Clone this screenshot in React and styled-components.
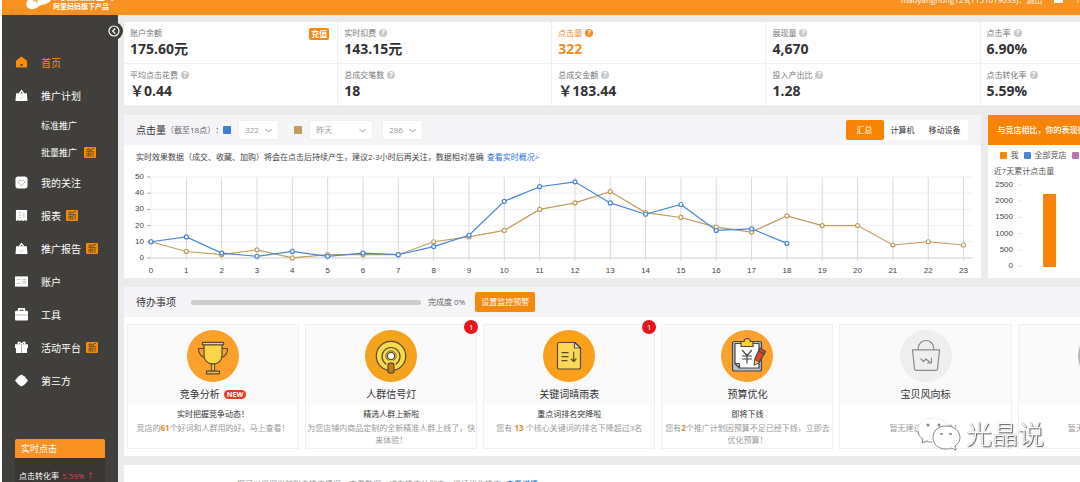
import React, { useState } from 'react';
import styled, { createGlobalStyle } from 'styled-components';

const GlobalStyle = createGlobalStyle`
  * {
    box-sizing: border-box;
  }

  body {
    margin: 0;
    overflow: hidden;
    background: #fff;
    color: #333;
    font-family: 'Open Sans', 'Noto Sans CJK SC', sans-serif;
    font-size: 8px;
    line-height: 12px;
    text-spacing-trim: space-all;
  }

  button,
  select {
    font: inherit;
    cursor: pointer;
  }

  a {
    text-decoration: none;
  }
`;

const Page = styled.div`
  height: 100vh;
  display: flex;
  flex-direction: column;
  padding-left: 2px;
  overflow: hidden;
`;

const Header = styled.header`
  flex: none;
  height: 15px;
  display: flex;
  align-items: flex-end;
  justify-content: space-between;
  overflow: hidden;
  background: #fa9223;
  color: #fff;
`;

const Logo = styled.a`
  display: flex;
  align-items: flex-end;
  padding: 0 0 3px 23px;
  color: #fff;
`;

const LogoMark = styled.svg`
  width: 28px;
  height: 26px;
`;

const LogoName = styled.div`
  font-size: 13px;
  font-weight: 700;
  line-height: 16px;
`;

const LogoSub = styled.div`
  font-size: 7px;
  font-weight: 700;
  line-height: 10px;
`;

const Account = styled.div`
  display: flex;
  align-items: center;
  gap: 12px;
  padding-bottom: 9px;

  a {
    color: #fff;
  }
`;

const Body = styled.div`
  flex: 1;
  display: flex;
  min-height: 0;
`;

const Sidebar = styled.aside`
  position: relative;
  flex: none;
  width: 116px;
  padding: 31px 13px 0;
  background: #413f3b;
`;

const CollapseButton = styled.button`
  position: absolute;
  top: 7px;
  right: -5px;
  width: 18px;
  height: 18px;
  padding: 0;
  border: none;
  border-radius: 50%;
  background: #413f3b;

  svg {
    display: block;
  }
`;

const NavItem = styled.a`
  display: flex;
  align-items: center;
  height: ${(props) => (props.$sub ? '27px' : '33px')};
  padding-left: ${(props) => (props.$sub ? '26px' : '0')};
  color: ${(props) => (props.$active ? '#fa8b0c' : '#fff')};
  font-size: ${(props) => (props.$sub ? '9px' : '10px')};
  line-height: 16px;
  white-space: nowrap;

  svg {
    width: 13px;
    height: 13px;
    margin-right: 13px;
    color: ${(props) => (props.$active ? '#fa8b0c' : '#fff')};
  }
`;

const NewTag = styled.span`
  width: 12px;
  height: 11px;
  margin-left: ${(props) => (props.$wide ? '7px' : '5px')};
  border-radius: 1px;
  background: #f58a0a;
  color: #413f3b;
  font-size: 9px;
  line-height: 11px;
  text-align: center;
`;

const LivePanel = styled.section`
  width: 90px;
  margin-top: 42px;
  border-radius: 2px 2px 0 0;
  overflow: hidden;
  background: #383633;
  color: #fff;
`;

const LiveTitle = styled.h2`
  margin: 0;
  padding-left: 6px;
  background: #fa9223;
  font-size: 9px;
  font-weight: 400;
  line-height: 19px;
`;

const LiveRow = styled.p`
  margin: 0;
  padding: 12px 0 12px 4px;
  white-space: nowrap;

  span {
    margin-left: 3px;
    color: #d8414c;
  }
`;

const Main = styled.main`
  flex: 1;
  min-width: 0;
  padding: 7px 0 0 6px;
  overflow: hidden;
  background: #ecebec;
`;

const Board = styled.div`
  width: 112%;
  min-width: 1070px;
  display: flex;
  flex-direction: column;
  gap: 9px;
`;

const Metrics = styled.section`
  display: grid;
  grid-template-columns: repeat(5, 1fr);
  background: #fff;
`;

const Metric = styled.div`
  display: flex;
  justify-content: space-between;
  align-items: flex-start;
  height: 42px;
  padding: 4px 8px 0 6px;
  border-right: 1px solid #efeef0;
  border-bottom: 1px solid #efeef0;
  color: ${(props) => (props.$active ? '#f58a1f' : '#333')};
`;

const MetricLabel = styled.div`
  display: flex;
  align-items: center;
  gap: 3px;
  line-height: 14px;
  color: ${(props) => (props.$active ? '#f58a1f' : '#777')};
`;

const MetricValue = styled.div`
  font-size: 14px;
  font-weight: 700;
  line-height: 18px;
`;

const HelpDot = styled.span`
  width: 8px;
  height: 8px;
  border-radius: 50%;
  background: ${(props) => (props.$active ? '#f58a1f' : '#c8c8c8')};
  color: #fff;
  font-size: 7px;
  font-weight: 700;
  line-height: 8px;
  text-align: center;
`;

const RechargeButton = styled.button`
  height: 12px;
  margin-top: 2px;
  padding: 0 2px;
  border: none;
  border-radius: 2px;
  background: #f5890f;
  color: #fff;
  font-weight: 700;
  line-height: 12px;
`;

const Row = styled.div`
  display: flex;
  gap: 7px;
`;

const Panel = styled.section`
  min-width: 0;
  flex: ${(props) => (props.$basis ? `0 0 ${props.$basis}` : '1')};
  background: #fff;
`;

const PanelHeader = styled.div`
  display: flex;
  align-items: center;
  height: 30px;
  padding: 0 13px 0 12px;
  background: #f5f4f6;
  color: #666;
  white-space: nowrap;
`;

const PanelTitle = styled.h2`
  margin: 0;
  color: #333;
  font-size: 10px;
  font-weight: 400;
`;

const Swatch = styled.span`
  flex: none;
  width: ${(props) => props.$size || 8}px;
  height: ${(props) => props.$size || 8}px;
  border-radius: 1px;
  background: ${(props) => props.$color};
`;

const SelectBox = styled.label`
  display: grid;
  align-items: center;
  width: ${(props) => props.$width}px;
  margin: 0 ${(props) => props.$after}px 0 7px;

  select,
  svg {
    grid-area: 1 / 1;
  }

  svg {
    justify-self: end;
    margin-right: 7px;
    pointer-events: none;
  }

  select {
    appearance: none;
    width: 100%;
    height: 20px;
    padding: 0 6px;
    border: 1px solid #efeef0;
    border-radius: 2px;
    background: #fff;
    color: #999;
  }
`;

const Tabs = styled.div`
  display: flex;
  margin-left: auto;
`;

const Tab = styled.button`
  height: 20px;
  padding: 0 ${(props) => (props.$active ? '11px' : '7px')};
  border: none;
  border-radius: 2px;
  background: ${(props) => (props.$active ? '#f88406' : '#fff')};
  color: ${(props) => (props.$active ? '#fff' : '#333')};
`;

const ChartNote = styled.p`
  display: flex;
  gap: 3px;
  margin: 0;
  padding: 6px 12px;
  color: #444;
  white-space: nowrap;

  a {
    color: #2d6fe0;
  }
`;

const Chart = styled.svg`
  display: block;
  width: 100%;

  text {
    font-family: 'Liberation Sans', sans-serif;
    font-size: 8px;
    fill: #444;
  }
`;

const RivalHeader = styled.h2`
  margin: 0;
  padding-left: 10px;
  background: #f88406;
  color: #fff;
  font-size: 8px;
  font-weight: 500;
  line-height: 30px;
`;

const Legend = styled.div`
  display: flex;
  align-items: center;
  padding: 4px 0 4px 12px;
  color: #555;

  span + b {
    margin: 0 5px 0 4px;
    font-weight: 400;
  }
`;

const ChartTitle = styled.h3`
  margin: 0;
  padding-left: 6px;
  color: #555;
  font-size: 8px;
  font-weight: 400;
`;

const ProgressTrack = styled.div`
  width: 230px;
  height: 5px;
  margin: 0 7px 0 15px;
  border-radius: 3px;
  background: #ccc;
`;

const AlertButton = styled.button`
  height: 20px;
  margin-left: 10px;
  padding: 0 6px;
  border: none;
  border-radius: 2px;
  background: #f5890f;
  color: #fff;
`;

const Cards = styled.div`
  display: grid;
  grid-template-columns: repeat(6, 1fr);
  gap: 6px;
  padding: 7px 5px 7px 3px;
`;

const Card = styled.article`
  position: relative;
  height: 125px;
  border: 1px solid #efeef0;
  text-align: center;
`;

const CardTop = styled.div`
  display: flex;
  flex-direction: column;
  align-items: center;
  height: 79px;
  padding-top: 5px;
  background: #fafafb;

  svg {
    width: 52px;
    height: 52px;
  }
`;

const CardTitle = styled.h3`
  display: flex;
  align-items: center;
  gap: 4px;
  margin: 4px 0 0;
  font-size: 10px;
  font-weight: 400;
  line-height: 16px;
`;

const NewPill = styled.span`
  padding: 0 3px;
  border-radius: 5px;
  background: #e8381c;
  color: #fff;
  font-size: 7px;
  font-weight: 700;
  line-height: 9px;
`;

const CardLead = styled.p`
  height: 12px;
  margin: 4px 0 2px;
  color: #333;
`;

const CardText = styled.p`
  margin: 0;
  color: #999;

  b {
    color: #e5873a;
  }
`;

const CountBadge = styled.span`
  position: absolute;
  top: -5px;
  right: -2px;
  width: 14px;
  height: 14px;
  border-radius: 50%;
  background: #e8141c;
  color: #fff;
  line-height: 14px;
`;

const Notice = styled.section`
  height: 60px;
  padding: 13px 12px 0 113px;
  background: #fff;
  color: #999;

  a {
    margin-left: 5px;
    color: #2d6fc0;
  }
`;

const Watermark = styled.div`
  position: fixed;
  right: 36px;
  bottom: 30px;
  display: flex;
  align-items: center;
  gap: 5px;
  color: #fff;
  font-size: 26px;
  font-weight: 300;
  line-height: 36px;
  text-shadow: 1px 1px 1px #555, 0 0 1px #888;
`;

const navItems = [
  { icon: 'home', label: '首页', active: true },
  { icon: 'bag', label: '推广计划' },
  { label: '标准推广', sub: true },
  { label: '批量推广', sub: true, isNew: true },
  { icon: 'heart', label: '我的关注' },
  { icon: 'report', label: '报表', isNew: true },
  { icon: 'bag', label: '推广报告', isNew: true },
  { icon: 'account', label: '账户' },
  { icon: 'tool', label: '工具' },
  { icon: 'gift', label: '活动平台', isNew: true },
  { icon: 'third', label: '第三方' },
];

const metrics = [
  { label: '账户余额', value: '175.60元', recharge: true },
  { label: '实时扣费', value: '143.15元', help: true },
  { label: '点击量', value: '322', help: true, active: true },
  { label: '展现量', value: '4,670', help: true },
  { label: '点击率', value: '6.90%', help: true },
  { label: '平均点击花费', value: '￥0.44', help: true },
  { label: '总成交笔数', value: '18', help: true },
  { label: '总成交金额', value: '￥183.44', help: true },
  { label: '投入产出比', value: '1.28', help: true },
  { label: '点击转化率', value: '5.59%', help: true },
];

const today = [10, 13, 3, 1, 4, 1, 3, 2, 7, 14, 35, 44, 47, 34, 27, 33, 17, 18, 9];
const yesterday = [10, 4, 2, 5, 0, 2, 2, 2, 10, 13, 17, 30, 34, 41, 28, 25, 19, 16, 26, 20, 20, 8, 10, 8];

const cards = [
  {
    icon: 'trophy',
    title: '竞争分析',
    isNew: true,
    lead: '实时把握竞争动态！',
    text: <>竞店的<b>61</b>个好词和人群用的好，马上查看！</>,
  },
  {
    icon: 'signal',
    title: '人群信号灯',
    count: 1,
    lead: '精选人群上新啦',
    text: '为您店铺内商品定制的全新精准人群上线了，快来体验！',
  },
  {
    icon: 'sheet',
    title: '关键词晴雨表',
    count: 1,
    lead: '重点词排名突降啦',
    text: <>您有 <b>13</b> 个核心关键词的排名下降超过3名</>,
  },
  {
    icon: 'budget',
    title: '预算优化',
    lead: '即将下线',
    text: <>您有<b>2</b>个推广计划因预算不足已经下线，立即去优化预算！</>,
  },
  { icon: 'basket', title: '宝贝风向标', text: '暂无建议，请期待！' },
  { icon: 'blank', title: '抢位助手', text: '暂无建议，请期待！' },
];

const navIcons = {
  home: (
    <>
      <path d="M7 0.5 1 5v7.5h12V5z" fill="currentColor" />
      <path d="M5.5 8.5h3l-1.5 3z" fill="#413f3b" />
    </>
  ),
  bag: (
    <>
      <path d="M4.5 5 7 1.8 9.5 5" fill="none" stroke="currentColor" strokeWidth="1.5" />
      <path d="M1.2 4.500h11.600l.7 8.500H.5z" fill="currentColor" />
      <path d="m5 9 1.500 1.500L9 8" fill="none" stroke="#ccc" />
    </>
  ),
  heart: (
    <>
      <rect x="0.5" y="0.5" width="13" height="13" rx="3" fill="currentColor" />
      <path d="M7 10.500 4 7.500c-1.500-2 1.500-4 3-2 1.500-2 4.500 0 3 2z" fill="none" stroke="#999" strokeWidth="0.8" />
    </>
  ),
  report: (
    <>
      <path d="M1 1h12v12l-2-1-2 1-2-1-2 1-2-1-2 1z" fill="currentColor" />
      <path d="M4 4h3M4 6.500h3M4 9h3M9.500 4v5" stroke="#bbb" />
    </>
  ),
  account: (
    <>
      <rect x="0" y="1.5" width="14" height="11" fill="currentColor" />
      <path d="M2 5h4M2 9h4M8 5h4M8 7h4M8 9h4" stroke="#bbb" />
    </>
  ),
  tool: (
    <>
      <path d="M4 4V1h6v3" fill="none" stroke="currentColor" strokeWidth="1.8" />
      <rect x="0" y="3" width="14" height="10.5" rx="1" fill="currentColor" />
      <path d="M0 7.500h14" stroke="#999" strokeWidth="0.7" />
    </>
  ),
  gift: (
    <>
      <path d="M7 4C5 0 2 1 4 4M7 4c2-4 5-3 3 0" fill="none" stroke="currentColor" strokeWidth="1.5" />
      <path d="M0 3.500h14v4H0zM1 7.500h12V13H1z" fill="currentColor" />
      <path d="M7 3.500V13" stroke="#999" strokeWidth="0.8" />
    </>
  ),
  third: <path d="M7 .5 10 2.500l2 2L14 7l-2 2.500-2 2-3 2-3-2-2-2L0 7l2-2.500 2-2z" fill="currentColor" />,
};

const line = { fill: 'none', stroke: '#5b4a33', strokeWidth: 1.2, strokeLinecap: 'round', strokeLinejoin: 'round' };

const cardIcons = {
  trophy: (
    <>
      <circle cx="26" cy="26" r="26" fill="#fca02c" />
      <g {...line}>
        <path d="M16.500 18.500h-5c0 5 2 8 7 9.500M35.500 18.500h5c0 5-2 8-7 9.500" />
        <path d="M17 14.500h18v11c0 5-4 8.500-9 8.500s-9-3.500-9-8.500z" fill="#f9d649" />
        <path d="M15.500 12.300h21v2.500h-21z" fill="#f9d649" />
        <path d="M24.500 34h3v7h-3z" fill="#f9d649" />
        <path d="M19.500 41.200h13v2.600h-13z" fill="#e8c060" />
      </g>
    </>
  ),
  signal: (
    <>
      <circle cx="26" cy="26" r="26" fill="#f3a31c" />
      <g {...line}>
        <circle cx="26" cy="26" r="14.7" fill="#f7d94c" />
        <path d="M21 34a9 9 0 1 1 10 0" />
        <path d="M23.500 30.500a5.200 5.200 0 1 1 5 0" strokeWidth="0.8" />
        <circle cx="26" cy="26" r="3.6" fill="#fff" />
        <path d="M23 42v-6.500c0-3.500 6-3.500 6 0V42c-1.500 1.500-4.500 1.500-6 0z" fill="#c9791c" />
      </g>
    </>
  ),
  sheet: (
    <>
      <circle cx="26" cy="26" r="26" fill="#faa11c" />
      <g {...line}>
        <path d="M16 12.500h16l5.500 5.500v19c0 1-1 2-2 2H16c-1 0-1.500-1-1.500-2V14c0-1 .5-1.500 1.500-1.500z" fill="#f9d955" />
        <path d="M31.500 12.500V18h6z" fill="#fff" />
        <path d="M19 22.700h6M19 26.700h6M19 30.700h5M30.700 22v9.500M28.300 29l2.400 2.700L33 29" />
      </g>
    </>
  ),
  budget: (
    <>
      <circle cx="26" cy="26" r="26" fill="#fba22e" />
      <g {...line} stroke="#474747">
        <rect x="11.5" y="11.5" width="29" height="29.5" rx="2" fill="#b9bccb" />
        <path d="M14 13.500h24V38H19l-5-5z" fill="#fff" />
        <path d="M14 33.500h4.500V38z" fill="#ddd" />
        <path d="M20 11.500h3c.5-4 6-4 6.500 0H32v5H20z" fill="#f9cf3c" />
        <path d="m21.500 20.500 4.500 5 4.500-5M26 25.500V33M21.500 26h9M21.500 29h9" />
        <path d="m39 18 5.500 3.500-6 10.500-5 2.500.5-6z" fill="#e2452d" />
        <path d="m33 35 .7-5.500 4.600 3z" fill="#f2c45c" strokeWidth="0.8" />
        <path d="m37.500 20.700 5.500 3.300" />
      </g>
    </>
  ),
  basket: (
    <>
      <circle cx="26" cy="26" r="26" fill="#eeeeef" />
      <g {...line} stroke="#8b8b8b">
        <path d="M12.500 19.800h27l-2 19c0 1-.5 1.500-1.500 1.500H16c-1 0-1.500-.5-1.500-1.500z" />
        <path d="M18 19.500c0-12 16-12 16 0" />
        <path d="m21 29 2.500 2.500L26 29l4 3.500M31.500 28v5h-4" />
      </g>
    </>
  ),
  blank: <circle cx="26" cy="26" r="26" fill="#b5b5b5" />,
};

const plotX = (hour) => 27 + (hour * 813) / 23;
const plotY = (clicks) => 89 - (clicks * 81) / 50;

const Series = ({ data, color }) => (
  <g stroke={color} fill="none">
    <polyline points={data.map((v, i) => `${plotX(i)},${plotY(v)}`).join(' ')} strokeWidth="1.2" />
    {data.map((v, i) => (
      <circle key={i} cx={plotX(i)} cy={plotY(v)} r="2" fill="#fff" strokeWidth="1.2" />
    ))}
  </g>
);

const ClickChart = () => (
  <Chart viewBox="0 0 857 109" role="img" aria-label="点击量">
    {[0, 10, 20, 30, 40, 50].map((v) => (
      <g key={v}>
        <path d={`M27 ${plotY(v)}H849`} stroke={v === 0 ? '#ccc' : '#f0f0f2'} />
        <path d={`M23 ${plotY(v)}h4`} stroke="#aaa" />
        <text x="20" y={plotY(v) + 2} textAnchor="end">{v}</text>
      </g>
    ))}
    {yesterday.map((_, hour) => (
      <g key={hour}>
        <path d={`M${plotX(hour)} 8V92`} stroke={hour === 0 ? '#eee' : '#d9d8df'} />
        <text x={plotX(hour)} y="104" textAnchor="middle">{hour}</text>
      </g>
    ))}
    <Series data={yesterday} color="#bf9d5e" />
    <Series data={today} color="#4a86d4" />
  </Chart>
);

const RivalChart = () => (
  <Chart viewBox="0 0 207 101" role="img" aria-label="近7天累计点击量">
    {[0, 500, 1000, 1500, 2000, 2500].map((v) => {
      const y = 89 - (v * 81) / 2500;
      return (
        <g key={v}>
          <text x="25" y={y + 2} textAnchor="end">{v}</text>
          <path d={`M31 ${y}h3`} stroke="#ddd" />
        </g>
      );
    })}
    <rect x="55" y="17" width="13" height="73" rx="1" fill="#f88406" />
  </Chart>
);

const Dropdown = ({ label, options, width, after = 0 }) => (
  <SelectBox $width={width} $after={after}>
    <select aria-label={label}>
      {options.map((option) => (
        <option key={option}>{option}</option>
      ))}
    </select>
    <svg width="7" height="5" viewBox="0 0 7 5">
      <path d="m.5 1 3 3 3-3" fill="none" stroke="#999" />
    </svg>
  </SelectBox>
);

const App = () => {
  const [device, setDevice] = useState('汇总');

  return (
    <Page>
      <GlobalStyle />
      <Header>
        <Logo href="#">
          <LogoMark viewBox="0 0 28 26">
            <path d="M2 21C-1 16 6 6 17 4c8-1 13 4 9 10-3 5-9 4-12 6-4 4-9 4-12 1z" fill="#fff" />
            <path d="M8 15c3 0 5-1 7-4M11 12l1 5" fill="none" stroke="#fa9223" />
          </LogoMark>
          <div>
            <LogoName>淘宝直通车</LogoName>
            <LogoSub>阿里妈妈旗下产品</LogoSub>
          </div>
        </Logo>
        <Account>
          <span>maoyanghong123(1151019033)：<a href="#">退出</a></span>
          <svg width="9" height="7" viewBox="0 0 9 7">
            <rect width="9" height="6" fill="#fff" />
          </svg>
          <span>1</span>
        </Account>
      </Header>

      <Body>
        <Sidebar>
          <CollapseButton aria-label="收起">
            <svg width="18" height="18" viewBox="0 0 18 18" fill="none" stroke="#fff">
              <circle cx="9" cy="9" r="5" strokeWidth="1.2" />
              <path d="M10.200 6.500 7.700 9l2.500 2.500" strokeWidth="1.2" />
            </svg>
          </CollapseButton>
          <nav>
            {navItems.map((item) => (
              <NavItem key={item.label} href="#" $sub={item.sub} $active={item.active}>
                {item.icon && <svg viewBox="0 0 14 14">{navIcons[item.icon]}</svg>}
                {item.label}
                {item.isNew && <NewTag $wide={item.sub}>新</NewTag>}
              </NavItem>
            ))}
          </nav>
          <LivePanel>
            <LiveTitle>实时点击</LiveTitle>
            <LiveRow>点击转化率<span>5.59% ↑</span></LiveRow>
          </LivePanel>
        </Sidebar>

        <Main>
          <Board>
            <Metrics>
              {metrics.map((metric) => (
                <Metric key={metric.label} $active={metric.active}>
                  <div>
                    <MetricLabel $active={metric.active}>
                      {metric.label}
                      {metric.help && <HelpDot $active={metric.active}>?</HelpDot>}
                    </MetricLabel>
                    <MetricValue>{metric.value}</MetricValue>
                  </div>
                  {metric.recharge && <RechargeButton>充值</RechargeButton>}
                </Metric>
              ))}
            </Metrics>

            <Row>
              <Panel $basis="80%">
                <PanelHeader>
                  <PanelTitle>点击量</PanelTitle>
                  （截至18点）：
                  <Swatch $color="#3f7fd6" />
                  <Dropdown label="今天" options={['322']} width={41} after={15} />
                  <Swatch $color="#bf9d5e" />
                  <Dropdown label="对比日期" options={['昨天', '上周同期']} width={64} after={2} />
                  <Dropdown label="对比数值" options={['286']} width={41} />
                  <Tabs>
                    {['汇总', '计算机', '移动设备'].map((name) => (
                      <Tab key={name} $active={device === name} onClick={() => setDevice(name)}>
                        {name}
                      </Tab>
                    ))}
                  </Tabs>
                </PanelHeader>
                <ChartNote>
                  实时效果数据（成交、收藏、加购）将会在点击后持续产生，建议2-3小时后再关注，数据相对准确
                  <a href="#">查看实时概况&gt;</a>
                </ChartNote>
                <ClickChart />
              </Panel>

              <Panel>
                <RivalHeader>与竞店相比，你的表现很优秀</RivalHeader>
                <Legend>
                  <Swatch $color="#f88406" $size={7} />
                  <b>我</b>
                  <Swatch $color="#4a86d4" $size={7} />
                  <b>全部竞店</b>
                  <Swatch $color="#b772b4" $size={7} />
                  <b>优秀竞店</b>
                </Legend>
                <ChartTitle>近7天累计点击量</ChartTitle>
                <RivalChart />
              </Panel>
            </Row>

            <Panel>
              <PanelHeader>
                <PanelTitle>待办事项</PanelTitle>
                <ProgressTrack role="progressbar" aria-label="完成度" aria-valuenow={0} />
                完成度 0%
                <AlertButton>设置监控预警</AlertButton>
              </PanelHeader>
              <Cards>
                {cards.map((card) => (
                  <Card key={card.title}>
                    <CardTop>
                      <svg viewBox="0 0 52 52">{cardIcons[card.icon]}</svg>
                      <CardTitle>
                        {card.title}
                        {card.isNew && <NewPill>NEW</NewPill>}
                      </CardTitle>
                    </CardTop>
                    <CardLead>{card.lead}</CardLead>
                    <CardText>{card.text}</CardText>
                    {card.count && <CountBadge>{card.count}</CountBadge>}
                  </Card>
                ))}
              </Cards>
            </Panel>

            <Notice>
              您可以根据当前账户推广情况，查看数据，或在推广计划中，继续优化推广
              <a href="#">查看详情</a>
            </Notice>
          </Board>
        </Main>
      </Body>

      <Watermark>
        <svg width="44" height="34" viewBox="0 0 44 34">
          <path
            d="M16 1C7 1 1 6 1 13c0 4 2 7 5 9l-1 4 5-2c2 1 4 1 6 1 9 0 16-5 16-12S25 1 16 1z"
            fill="#fff"
            stroke="#eee"
          />
          <path d="M1 14c0 4 2 6 5 8l-1 4 5-2c2 1 3 1 5 1" fill="none" stroke="#888" />
          <circle cx="11" cy="8" r="1.5" fill="#888" />
          <circle cx="22" cy="8" r="1.5" fill="#888" />
          <path
            d="M29 9c-8 0-13 5-13 11.500S21 32 29 32c2 0 4 0 5-1l5 2-1-4c3-2 5-5 5-8.500C43 14 37 9 29 9z"
            fill="#fff"
            stroke="#888"
          />
          <path d="M23 17h3M32 17h3" stroke="#888" strokeWidth="1.5" />
        </svg>
        光晶说
      </Watermark>
    </Page>
  );
};

export default App;
